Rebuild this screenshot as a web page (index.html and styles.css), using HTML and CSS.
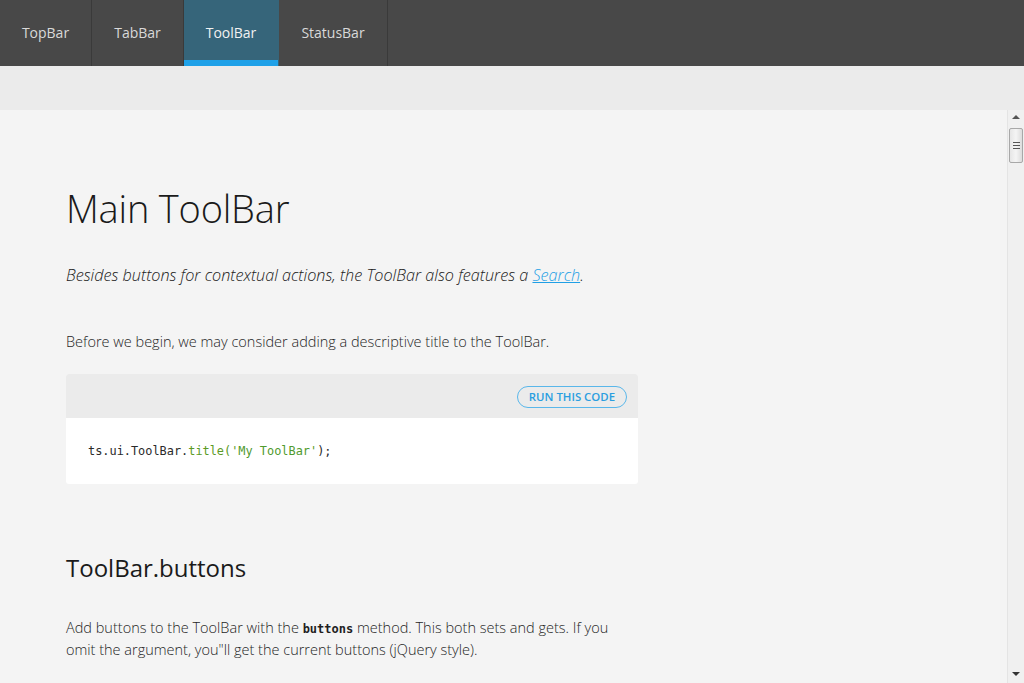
FILE: index.html
```html
<!DOCTYPE html>
<html>
<head>
<meta charset="utf-8">
<link rel="stylesheet" href="styles.css">
</head>
<body>
<nav class="topnav">
  <a class="tab">TopBar</a>
  <a class="tab">TabBar</a>
  <a class="tab active">ToolBar</a>
  <a class="tab">StatusBar</a>
</nav>
<div class="band"></div>
<div class="panel">
  <main class="content">
    <h1>Main ToolBar</h1>
    <p class="lead">Besides buttons for contextual actions, the ToolBar also features a <a href="#" class="link">Search</a>.</p>
    <p class="text first">Before we begin, we may consider adding a descriptive title to the ToolBar.</p>
    <div class="code">
      <div class="code-head"><button class="run">RUN THIS CODE</button></div>
      <pre class="code-body"><span class="c-id">ts.ui.ToolBar.</span><span class="c-fn">title('</span><span class="c-str">My ToolBar</span><span class="c-fn">'</span><span class="c-id">);</span></pre>
    </div>
    <h2>ToolBar.buttons</h2>
    <p class="text">Add buttons to the ToolBar with the <code>buttons</code> method. This both sets and gets. If you omit the argument, you"ll get the current buttons (jQuery style).</p>
    <div class="code next"><div class="code-head"></div></div>
  </main>
  <div class="scrollbar">
    <div class="arrow up"></div>
    <div class="thumb"><span></span><span></span><span></span></div>
    <div class="track"></div>
    <div class="arrow down"></div>
  </div>
</div>
</body>
</html>
```
FILE: styles.css
```css
* { box-sizing: border-box; }
html, body { margin: 0; padding: 0; height: 100%; overflow: hidden; }
body {
  font-family: "Open Sans", "Liberation Sans", sans-serif;
  background: #f4f4f4;
  color: #333;
}
.topnav {
  display: flex;
  height: 66px;
  background: #484848;
}
.tab {
  display: flex;
  align-items: center;
  justify-content: center;
  color: #d9d9d9;
  font-size: 14px;
  border-right: 1px solid #3a3a3a;
  padding-bottom: 2px;
}
.tab:nth-child(1) { width: 92px; }
.tab:nth-child(2) { width: 92px; }
.tab:nth-child(3) { width: 95px; }
.tab:nth-child(4) { width: 109px; }
.tab.active {
  background: #36657a;
  color: #f2f2f2;
  box-shadow: inset 0 -6px 0 #1fa1e8;
  border-right-color: #36657a;
}
.band { height: 44px; background: #ebebeb; }
.panel {
  display: flex;
  height: 573px;
  background: #f4f4f4;
}
.content {
  flex: 1;
  padding: 72px 0 0 66px;
  overflow: hidden;
}
.content > * { width: 572px; }
h1 {
  margin: 0;
  font-weight: 300;
  font-size: 38px;
  line-height: 52px;
  color: #1a1a1a;
  letter-spacing: -0.2px;
}
.lead {
  margin: 29px 0 0;
  font-style: italic;
  font-weight: 300;
  font-size: 16.2px;
  line-height: 24px;
  color: #1a1a1a;
}
.link { color: #1f9fe5; }
.text {
  margin: 0;
  font-weight: 300;
  font-size: 14.5px;
  line-height: 22px;
  color: #1f1f1f;
}
.text.first { margin-top: 44px; }
.code {
  margin-top: 21px;
  border-radius: 3px;
  overflow: hidden;
  background: #fff;
}
.code-head {
  height: 44px;
  background: #ebebeb;
  display: flex;
  justify-content: flex-end;
  align-items: center;
  padding: 2px 11px 0 0;
}
.run {
  height: 22px;
  padding: 0 11px;
  border: 1px solid #5ab7ea;
  border-radius: 11px;
  background: transparent;
  color: #2a9ee0;
  font-family: "Open Sans", sans-serif;
  font-size: 11.4px;
  font-weight: 600;
  line-height: 20px;
}
.code-body {
  margin: 0;
  height: 66px;
  padding: 23px 22px 0;
  font-family: "DejaVu Sans Mono", "Liberation Mono", monospace;
  font-size: 11.9px;
  line-height: 20px;
}
.c-id { color: #2a2a2a; }
.c-fn { color: #5b9a25; }
.c-str { color: #4f9a2e; }
h2 {
  margin: 68px 0 0;
  font-weight: 400;
  font-size: 24px;
  line-height: 32px;
  color: #1a1a1a;
}
h2 + .text { margin-top: 33px; }
code {
  font-family: "DejaVu Sans Mono", monospace;
  font-weight: 700;
  font-size: 12px;
  line-height: 1;
}
.code.next { margin-top: 22px; }
.scrollbar {
  width: 17px;
  display: flex;
  flex-direction: column;
  background: #f0f0f0;
  border-left: 1px solid #e4e4e4;
}
.arrow { height: 17px; position: relative; }
.arrow::after {
  content: "";
  position: absolute;
  left: 4px;
  border-left: 4px solid transparent;
  border-right: 4px solid transparent;
}
.arrow.up::after { top: 5px; border-bottom: 4px solid #555; }
.arrow.down::after { top: 6px; border-top: 4px solid #333; }
.thumb {
  margin: 1px 1px 0 1px;
  height: 35px;
  border: 1px solid #a8a8a8;
  border-radius: 2px;
  background: linear-gradient(to right, #e6e6e6, #f4f4f4 50%, #dcdcdc);
  display: flex;
  flex-direction: column;
  justify-content: center;
  align-items: center;
  gap: 2px;
}
.thumb span { width: 7px; height: 1px; background: #555; }
.track { flex: 1; }
```
